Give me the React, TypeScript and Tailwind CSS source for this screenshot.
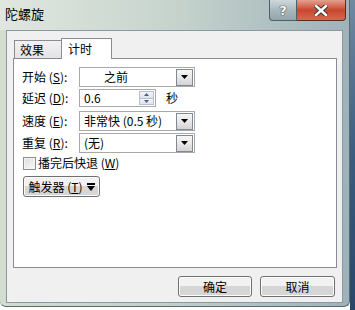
import React from "react";

const F = { fontFamily: '"Noto Sans CJK SC", "Noto Sans", sans-serif' };

function DropBtn() {
  return (
    <div className="w-[17px] h-[17px] flex items-center justify-center border border-[#7f8a96] bg-gradient-to-b from-[#f6f6f6] via-[#e8e8e8] to-[#d4d4d4]">
      <svg width="7" height="4" viewBox="0 0 7 4">
        <polygon points="0,0 7,0 3.5,4" fill="#000" />
      </svg>
    </div>
  );
}

function Select({ text, pad = "pl-[3px]" }: { text: string; pad?: string }) {
  return (
    <div className="w-[116px] h-[20px] border border-[#a9a9a9] bg-white flex items-center p-[1px]">
      <div className={`flex-1 text-[12px] leading-none text-black whitespace-pre ${pad}`}>{text}</div>
      <DropBtn />
    </div>
  );
}

function Label({ a, k }: { a: string; k: string }) {
  return (
    <div className="w-[57px] text-[12px] leading-none text-black whitespace-pre">
      {a} (<span className="underline">{k}</span>):
    </div>
  );
}

function Btn({ children, w }: { children: React.ReactNode; w: string }) {
  return (
    <div
      className={`${w} h-[21px] rounded-[3px] border border-[#707070] bg-gradient-to-b from-[#f2f2f2] from-50% to-[#d6d6d6] to-50% flex items-center justify-center text-[12px] text-black leading-none shadow-[inset_0_0_0_1px_#fcfcfc]`}
    >
      {children}
    </div>
  );
}

export default function App() {
  return (
    <div className="w-[355px] h-[310px] flex bg-white overflow-hidden" style={F}>
      <div className="w-[350px] h-[307px] flex flex-col rounded-b-[6px] bg-gradient-to-r from-[#d3ddd0] via-[#c0cfc8] to-[#9db2b9] border-r border-b border-[#5a6a74]">
        <div className="h-[30px] flex items-start bg-gradient-to-r from-[#e0e7df] via-[#c6d3cd] to-[#9fb2b8]">
          <div className="pl-[5px] pt-[7px] text-[13px] leading-none text-black">陀螺旋</div>
          <div className="flex-1" />
          <div className="flex mr-[3px]">
            <div className="w-[28px] h-[21px] rounded-bl-[4px] border border-t-0 border-[#4f5e68] bg-gradient-to-b from-[#cfd8db] via-[#aab8bd] to-[#93a5ab] flex items-center justify-center">
              <span className="text-[13px] font-bold text-white leading-none [text-shadow:0_0_1px_#222,0_0_1px_#222]" style={{ fontFamily: '"DejaVu Sans", sans-serif' }}>?</span>
            </div>
            <div className="w-[49px] h-[21px] rounded-br-[4px] border border-l-0 border-t-0 border-[#5b2c24] bg-gradient-to-b from-[#e2a08f] via-[#c8462f] to-[#d26b4d] flex items-center justify-center">
              <svg width="14" height="11" viewBox="0 0 14 11">
                <path d="M2 1 L12 10 M12 1 L2 10" stroke="#3a3a3a" strokeWidth="4.5" strokeLinecap="square" />
                <path d="M2 1 L12 10 M12 1 L2 10" stroke="#fff" strokeWidth="2.5" strokeLinecap="square" />
              </svg>
            </div>
          </div>
        </div>
        <div className="mx-[6px] mb-[3px] flex-1 border border-[#8b98a4] bg-[#f0f0f0] flex flex-col">
          <div className="ml-[6px] mt-[7px] w-[324px] flex flex-col">
            <div className="flex items-end h-[20px] pl-[1px]">
              <div className="w-[48px] h-[18px] border border-b-0 border-[#898c95] bg-gradient-to-b from-[#f2f2f2] to-[#e3e3e3] flex items-center pl-[5px] text-[12px] leading-none text-black">
                效果
              </div>
              <div className="w-[51px] h-[21px] -ml-[1px] -mb-[1px] border border-b-0 border-[#898c95] bg-white flex items-start pt-[4px] pl-[6px] text-[12px] leading-none text-black relative z-10">
                计时
              </div>
            </div>
            <div className="h-[210px] border border-[#898c95] bg-white pt-[8px] pl-[8px] flex flex-col">
              <div className="flex items-center h-[20px]">
                <Label a="开始" k="S" />
                <Select text="之前" pad="pl-[23px]" />
              </div>
              <div className="flex items-center h-[18px] mt-[2px]">
                <Label a="延迟" k="D" />
                <div className="w-[77px] h-[18px] border border-[#a9a9a9] bg-white flex items-center p-[1px]">
                  <div className="flex-1 pl-[3px] text-[12px] leading-none text-black">0.6</div>
                  <div className="w-[15px] h-[14px] flex flex-col">
                    <div className="flex-1 border border-[#b6c2cf] bg-gradient-to-b from-[#f3f5f8] to-[#dde3ea] flex items-center justify-center">
                      <svg width="5" height="3" viewBox="0 0 5 3"><polygon points="2.5,0 5,3 0,3" fill="#4d6185" /></svg>
                    </div>
                    <div className="flex-1 border border-t-0 border-[#b6c2cf] bg-gradient-to-b from-[#f3f5f8] to-[#dde3ea] flex items-center justify-center">
                      <svg width="5" height="3" viewBox="0 0 5 3"><polygon points="0,0 5,0 2.5,3" fill="#4d6185" /></svg>
                    </div>
                  </div>
                </div>
                <div className="ml-[10px] text-[12px] leading-none text-black">秒</div>
              </div>
              <div className="flex items-center h-[20px] mt-[4px]">
                <Label a="速度" k="E" />
                <Select text="非常快 (0.5 秒)" />
              </div>
              <div className="flex items-center h-[20px] mt-[2px]">
                <Label a="重复" k="R" />
                <Select text="(无)" />
              </div>
              <div className="flex items-center h-[14px] mt-[3px] pl-[1px]">
                <div className="w-[13px] h-[13px] border border-[#8e8f8f] bg-gradient-to-br from-[#dcdcdc] to-[#fafafa] shadow-[inset_0_0_0_1px_#f4f4f4]" />
                <div className="ml-[2px] text-[12px] leading-none text-black whitespace-pre">
                  播完后快退 (<span className="underline">W</span>)
                </div>
              </div>
              <div className="mt-[6px] pl-[1px]">
                <Btn w="w-[77px]">
                  <span className="whitespace-pre">触发器 (<span className="underline">T</span>)</span>
                  <svg className="ml-[4px]" width="8" height="8" viewBox="0 0 8 8">
                    <rect x="0" y="0" width="8" height="2" fill="#000" />
                    <polygon points="0,3 8,3 4,8" fill="#000" />
                  </svg>
                </Btn>
              </div>
            </div>
          </div>
          <div className="flex-1" />
          <div className="flex justify-end gap-[8px] mr-[7px] mb-[5px]">
            <Btn w="w-[74px]">确定</Btn>
            <Btn w="w-[75px]">取消</Btn>
          </div>
        </div>
      </div>
      <div className="w-[5px] h-full bg-gradient-to-b from-[#6f8aa3] via-[#3b5d80] to-[#29466a]" />
    </div>
  );
}
